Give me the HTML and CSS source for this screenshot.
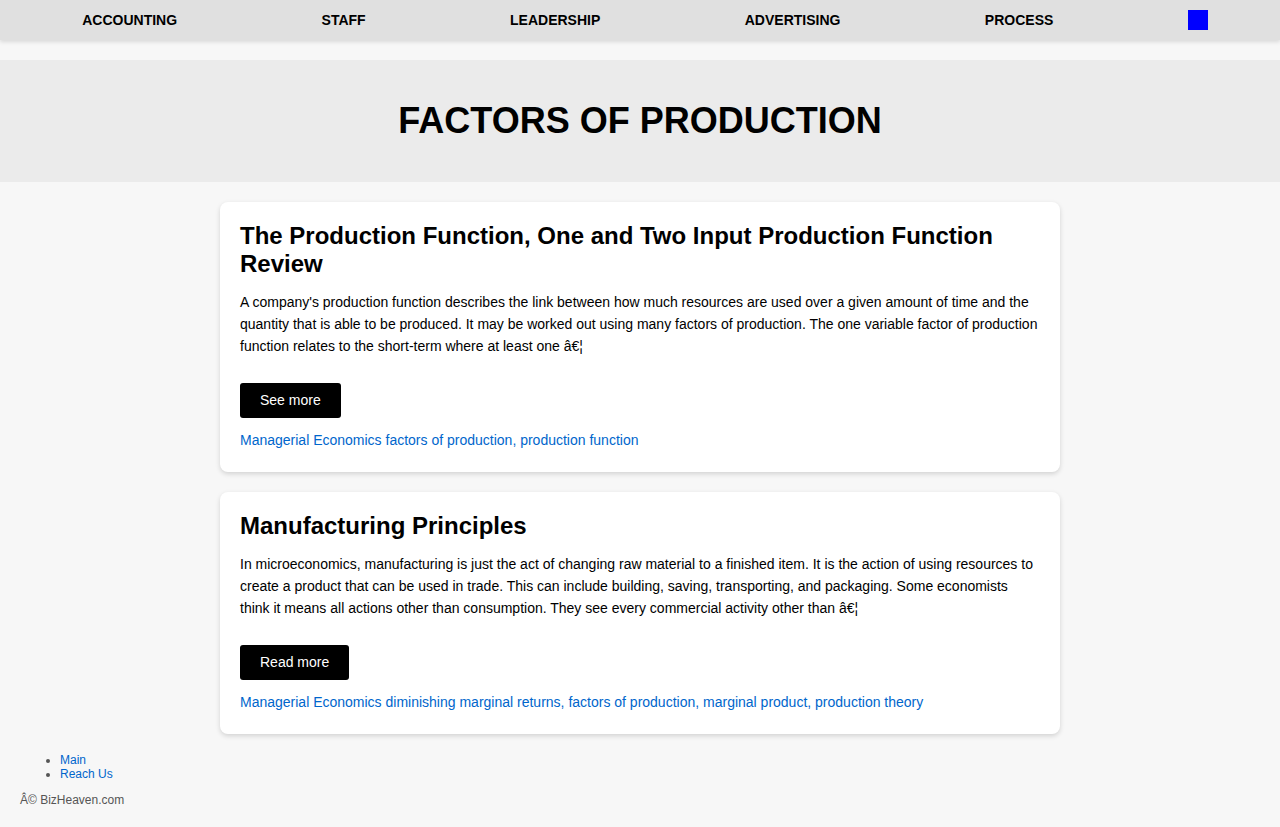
FILE: index.html
```
<!DOCTYPE html>
<html lang="en">
<head>
<meta charset="utf-8">
<title>Factors of Production</title>
<link rel="stylesheet" href="styles.css">
</head>
<body>
<nav class="topnav">
  <a class="nav-link" href="#">ACCOUNTING</a>
  <a class="nav-link" href="#">STAFF</a>
  <a class="nav-link" href="#">LEADERSHIP</a>
  <a class="nav-link" href="#">ADVERTISING</a>
  <a class="nav-link" href="#">PROCESS</a>
  <span class="nav-square"></span>
</nav>
<header class="page-header">
  <h1 class="page-title">FACTORS OF PRODUCTION</h1>
</header>
<main class="posts">
  <article class="card">
    <h2 class="card-title">The Production Function, One and Two Input Production Function Review</h2>
    <p class="card-text">A company's production function describes the link between how much resources are used over a given amount of time and the quantity that is able to be produced. It may be worked out using many factors of production. The one variable factor of production function relates to the short-term where at least one â€¦</p>
    <a class="btn" href="#">See more</a>
    <div class="tags"><a href="#">Managerial Economics</a> <a href="#">factors of production</a>, <a href="#">production function</a></div>
  </article>
  <article class="card">
    <h2 class="card-title">Manufacturing Principles</h2>
    <p class="card-text">In microeconomics, manufacturing is just the act of changing raw material to a finished item. It is the action of using resources to create a product that can be used in trade. This can include building, saving, transporting, and packaging. Some economists think it means all actions other than consumption. They see every commercial activity other than â€¦</p>
    <a class="btn" href="#">Read more</a>
    <div class="tags"><a href="#">Managerial Economics</a> <a href="#">diminishing marginal returns</a>, <a href="#">factors of production</a>, <a href="#">marginal product</a>, <a href="#">production theory</a></div>
  </article>
</main>
<footer class="site-footer">
  <ul class="footer-links">
    <li><a href="#">Main</a></li>
    <li><a href="#">Reach Us</a></li>
  </ul>
  <p class="copyright">Â© BizHeaven.com</p>
</footer>
</body>
</html>
```
FILE: styles.css
```
* { box-sizing: border-box; }
html, body { margin: 0; padding: 0; }
body {
  background: #f7f7f7;
  font-family: "Liberation Sans", Arial, Helvetica, sans-serif;
  color: #000;
}
.topnav {
  height: 40px;
  background: #e0e0e0;
  display: flex;
  align-items: center;
  justify-content: space-around;
  box-shadow: 0 2px 4px rgba(0,0,0,0.12);
  padding-left: 10px;
}
.nav-link {
  color: #000;
  text-decoration: none;
  font-weight: bold;
  font-size: 14px;
}
.nav-square {
  width: 20px;
  height: 20px;
  margin-left: -10px;
  background: #0000ff;
  display: block;
}
.page-header {
  margin-top: 20px;
  background: #ebebeb;
  height: 122px;
  display: flex;
  align-items: center;
  justify-content: center;
}
.page-title {
  margin: 0;
  font-size: 36px;
  font-weight: bold;
  line-height: 42px;
}
.posts {
  width: 840px;
  margin: 20px auto 0;
  display: flex;
  flex-direction: column;
  gap: 20px;
}
.card {
  background: #fff;
  border-radius: 8px;
  box-shadow: 0 2px 5px rgba(0,0,0,0.15);
  padding: 20px 20px 21px;
}
.card-title {
  margin: 0 0 13px;
  font-size: 24px;
  line-height: 28px;
  font-weight: bold;
}
.card-text {
  margin: 0 0 26px;
  font-size: 14px;
  line-height: 22px;
}
.btn {
  display: inline-block;
  background: #000;
  color: #fff;
  text-decoration: none;
  font-size: 14px;
  line-height: 17px;
  padding: 9px 20px;
  border-radius: 3px;
}
.tags {
  margin-top: 11px;
  font-size: 14px;
  line-height: 22px;
  color: #0066cc;
}
.tags a { color: #0066cc; text-decoration: none; }
.site-footer {
  padding: 19px 20px 20px;
  font-size: 12px;
}
.footer-links {
  margin: 0;
  padding-left: 40px;
  line-height: 14px;
  color: #555;
}
.footer-links a { color: #0066cc; text-decoration: none; }
.copyright {
  margin: 12px 0 0;
  color: #555;
  line-height: 14px;
}
```
